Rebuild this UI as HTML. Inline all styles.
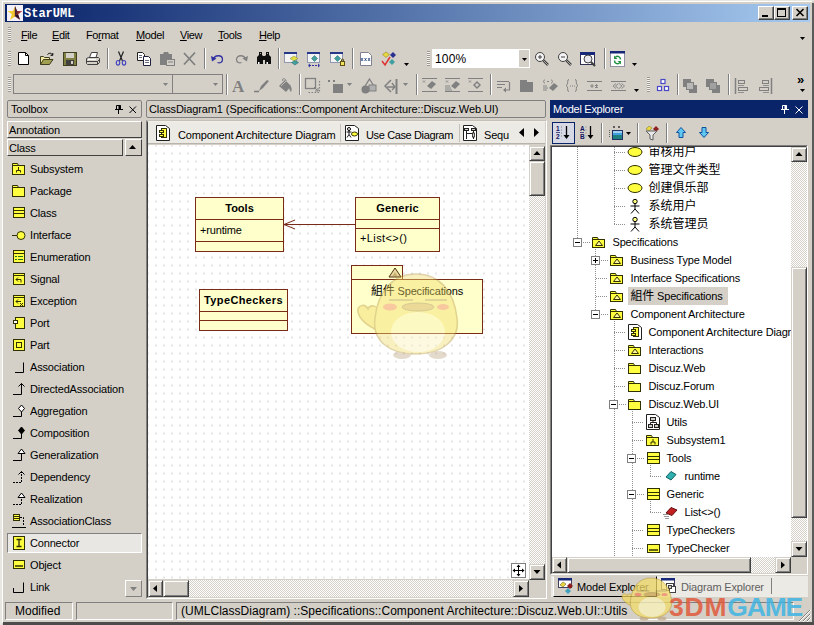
<!DOCTYPE html><html><head><meta charset="utf-8"><title>StarUML</title><style>
*{box-sizing:border-box;margin:0;padding:0}
html,body{width:814px;height:625px;overflow:hidden;background:#d4d0c8}
body{position:relative;font-family:"Liberation Sans","Noto Sans CJK SC",sans-serif;font-size:11px;color:#000;letter-spacing:-0.17px}
.a{position:absolute}
.t{position:absolute;white-space:nowrap;line-height:14px;height:14px}
.raised{border:1px solid;border-color:#fff #404040 #404040 #fff;background:#d4d0c8}
.sunk{border:1px solid;border-color:#808080 #fff #fff #808080}
.sep{position:absolute;width:2px;border-left:1px solid #808080;border-right:1px solid #fff}
.grip{position:absolute;width:3px;background:repeating-linear-gradient(to bottom,#9a9890 0,#9a9890 1px,#f4f2ee 1px,#f4f2ee 2px)}
svg{position:absolute;overflow:visible}
u{text-decoration:underline}
</style></head><body>
<div class="a" style="left:0;top:0;width:814px;height:1px;background:#e8e6e0"></div>
<div class="a" style="left:0;top:0;width:2px;height:625px;background:#e8e6e0"></div>
<div class="a" style="left:2px;top:1px;width:810px;height:1px;background:#fff"></div>
<div class="a" style="left:2px;top:1px;width:1px;height:622px;background:#fff"></div>
<div class="a" style="left:812px;top:3px;width:2px;height:622px;background:#5a5a5a"></div>
<div class="a" style="left:5px;top:4px;width:805px;height:18px;background:linear-gradient(to right,#0a246a 0%,#0a246a 2%,#a6caf0 100%)"></div>
<div class="t" style="left:24px;top:7px;font-family:'Liberation Mono',monospace;font-weight:bold;font-size:12px;color:#fff;letter-spacing:0">StarUML</div>
<div class="a" style="left:7px;top:5px;width:16px;height:16px;background:#f4f0f8"></div>
<svg style="left:7px;top:5px" width="16" height="16"><defs><linearGradient id="sg" x1="0" x2="1"><stop offset="0" stop-color="#f8e030"/><stop offset="0.450" stop-color="#f0c030"/><stop offset="0.550" stop-color="#602020"/><stop offset="1" stop-color="#d05050"/></linearGradient></defs><path d="M8 1l2 5h5.500l-4.300 3.300 1.800 5.700-5-3.500-5 3.500 1.800-5.700-4.300-3.300h5.500z" fill="url(#sg)"/><path d="M8 1l2 5 -2 5.500z" fill="#402040"/><path d="M8 10.500l5 4-2-5z" fill="#201030"/></svg>
<div class="a" style="left:758px;top:6px;width:16px;height:14px;background:#d4d0c8;border:1px solid;border-color:#fff #404040 #404040 #fff;box-shadow:inset -1px -1px 0 #808080"></div>
<div class="a" style="left:774px;top:6px;width:16px;height:14px;background:#d4d0c8;border:1px solid;border-color:#fff #404040 #404040 #fff;box-shadow:inset -1px -1px 0 #808080"></div>
<div class="a" style="left:792px;top:6px;width:16px;height:14px;background:#d4d0c8;border:1px solid;border-color:#fff #404040 #404040 #fff;box-shadow:inset -1px -1px 0 #808080"></div>
<div class="a" style="left:762px;top:15px;width:6px;height:2px;background:#000"></div>
<div class="a" style="left:777px;top:8px;width:9px;height:9px;border:1px solid #000;border-top-width:2px"></div>
<svg style="left:796px;top:9px" width="8" height="7"><path d="M0.500 0l7 7M7.500 0l-7 7" stroke="#000" stroke-width="1.600" fill="none"/></svg>
<div class="t" style="left:21px;top:28px;font-size:11px;letter-spacing:-0.4px"><u>F</u>ile</div>
<div class="t" style="left:52px;top:28px;font-size:11px;letter-spacing:-0.4px"><u>E</u>dit</div>
<div class="t" style="left:86px;top:28px;font-size:11px;letter-spacing:-0.4px">Fo<u>r</u>mat</div>
<div class="t" style="left:136px;top:28px;font-size:11px;letter-spacing:-0.4px"><u>M</u>odel</div>
<div class="t" style="left:180px;top:28px;font-size:11px;letter-spacing:-0.4px"><u>V</u>iew</div>
<div class="t" style="left:218px;top:28px;font-size:11px;letter-spacing:-0.4px"><u>T</u>ools</div>
<div class="t" style="left:259px;top:28px;font-size:11px;letter-spacing:-0.4px"><u>H</u>elp</div>
<div class="grip" style="left:8px;top:27px;height:15px"></div>
<div class="grip" style="left:8px;top:51px;height:15px"></div>
<div class="grip" style="left:8px;top:77px;height:15px"></div>
<svg style="left:16px;top:51px" width="16" height="16" viewBox="0 0 16 16"><path d="M2.5 1.5h7l3 3v9h-10z" fill="#fff" stroke="#000"/><path d="M9.5 1.5v3h3" fill="none" stroke="#000"/></svg>
<svg style="left:39px;top:51px" width="16" height="16" viewBox="0 0 16 16"><path d="M1.5 13.5v-8h3l1 1h5v2" fill="#f0e8a0" stroke="#404020"/><path d="M1.5 13.5l3-5h9.5l-3.500 5z" fill="#a0a050" stroke="#404020"/><path d="M8.500 3.500c2-2 4-1.500 5 0.500m0.300-2v2.300h-2.300" fill="none" stroke="#000"/></svg>
<svg style="left:62px;top:51px" width="16" height="16" viewBox="0 0 16 16"><rect x="1.500" y="1.500" width="13" height="13" fill="#808040" stroke="#404020"/><rect x="4" y="2" width="8" height="5" fill="#d4d0c8"/><rect x="4" y="9" width="8" height="5" fill="#404040"/><rect x="9" y="10" width="2" height="3" fill="#d4d0c8"/></svg>
<svg style="left:85px;top:51px" width="16" height="16" viewBox="0 0 16 16"><path d="M4.500 6.500l2-5h6l-1.500 5" fill="#fff" stroke="#404040"/><path d="M1.500 7.500l2-1h10l1 1v4l-2 2h-10l-1-1z" fill="#d4d0c8" stroke="#404040"/><path d="M1.500 10.500h11l2-2M12.500 10.500v3" fill="none" stroke="#404040"/><rect x="3" y="8" width="8" height="1" fill="#fff"/></svg>
<svg style="left:113px;top:51px" width="16" height="16" viewBox="0 0 16 16"><path d="M5.500 0.500l4 9.500M10.500 0.500l-4 9.500" stroke="#202020" fill="none" stroke-width="1.200"/><ellipse cx="5" cy="11.800" rx="1.700" ry="2.300" fill="none" stroke="#4848c0" stroke-width="1.200"/><ellipse cx="11" cy="11.800" rx="1.700" ry="2.300" fill="none" stroke="#4848c0" stroke-width="1.200"/></svg>
<svg style="left:136px;top:51px" width="16" height="16" viewBox="0 0 16 16"><path d="M1.500 1.500h5l2 2v6h-7z" fill="#fff" stroke="#202020"/><path d="M7.500 5.500h5l2 2v7h-7z" fill="#fff" stroke="#202040"/><path d="M3 4.500h3M3 6.500h3M9 9.500h4M9 11.500h4" stroke="#404060" stroke-width="0.800"/></svg>
<svg style="left:159px;top:51px" width="16" height="16" viewBox="0 0 16 16"><path d="M1 3h3l1-2h4l1 2h3v11h-12z" fill="#808080"/><rect x="7.500" y="8.500" width="8" height="6" fill="#d4d0c8" stroke="#808080"/><path d="M9 11h5" stroke="#808080"/></svg>
<svg style="left:182px;top:51px" width="16" height="16" viewBox="0 0 16 16"><path d="M2 2l11 12M13 1.500l-11 12" stroke="#808080" stroke-width="1.800" fill="none"/></svg>
<svg style="left:210px;top:51px" width="16" height="16" viewBox="0 0 16 16"><path d="M3.500 8.500c1-5 9-5 9 0c0 3-3 4-5 3" fill="none" stroke="#3030a0" stroke-width="1.300"/><path d="M1 5l1 5.500 4.500-3z" fill="#3030a0"/></svg>
<svg style="left:233px;top:51px" width="16" height="16" viewBox="0 0 16 16"><path d="M12.500 8.500c-1-5-9-5-9 0c0 3 3 4 5 3" fill="none" stroke="#808080" stroke-width="1.300"/><path d="M15 5l-1 5.500-4.500-3z" fill="#808080"/></svg>
<svg style="left:256px;top:51px" width="16" height="16" viewBox="0 0 16 16"><path d="M3 1h3v3l1 1v8h-6v-7l2-2zM10 1h3v3l2 2v7h-6v-8l1-1z" fill="#101010"/><rect x="6" y="5" width="4" height="4" fill="#101010"/><rect x="2" y="11" width="1.500" height="2" fill="#fff"/><rect x="10.500" y="11" width="1.500" height="2" fill="#fff"/><rect x="4" y="2" width="1" height="1" fill="#aaa"/><rect x="11" y="2" width="1" height="1" fill="#aaa"/></svg>
<svg style="left:284px;top:51px" width="16" height="16" viewBox="0 0 16 16"><rect x="0.500" y="1.500" width="12" height="10" fill="#f4f4f4" stroke="#9098b0"/><rect x="0" y="1" width="13" height="2" fill="#283888"/><path d="M10 5l4 2.500-4 2.500-4-2.500z" fill="#e0e040" stroke="#808040" stroke-width="0.500"/><path d="M11 9.500l3.500 2-3.500 2.500-3.500-2.500z" fill="#40a0a0" stroke="#206060" stroke-width="0.500"/></svg>
<svg style="left:307px;top:51px" width="16" height="16" viewBox="0 0 16 16"><rect x="0.500" y="1.500" width="12" height="10" fill="#f4f4f4" stroke="#9098b0"/><rect x="0" y="1" width="13" height="2" fill="#283888"/><path d="M7.500 4.500l3 3-3 3-3-3z" fill="#40a0a0" stroke="#206060" stroke-width="0.500"/><path d="M2 14.500h10M3 13l-2 1.500 2 1.500M11 13l2 1.500-2 1.500" stroke="#3030a0" fill="none" stroke-dasharray="2 1"/></svg>
<svg style="left:330px;top:51px" width="16" height="16" viewBox="0 0 16 16"><rect x="0.500" y="1.500" width="12" height="10" fill="#f4f4f4" stroke="#9098b0"/><rect x="0" y="1" width="13" height="2" fill="#283888"/><path d="M7.500 4.500l3 3-3 3-3-3z" fill="#40a0a0" stroke="#206060" stroke-width="0.500"/><rect x="10.500" y="10.500" width="4" height="4" fill="#f0e060" stroke="#605010"/><path d="M11.500 10.500v-1.500c0-1.500 2-1.500 2 0v1.500" fill="none" stroke="#605010"/></svg>
<svg style="left:358px;top:51px" width="16" height="16" viewBox="0 0 16 16"><path d="M2.500 1.500h8l3 3v10h-11z" fill="#fff" stroke="#808090"/><path d="M3 7l2 3M5 7l-2 3M6.500 7l2 3M8.500 7l-2 3M10 7l2 3M12 7l-2 3" stroke="#204080" stroke-width="0.800"/></svg>
<svg style="left:381px;top:51px" width="16" height="16" viewBox="0 0 16 16"><path d="M5 1l3.500 2.500-3.500 3-3.500-3z" fill="#e8d840" stroke="#807020" stroke-width="0.500"/><path d="M12 1l3 3-3 3-3-3z" fill="#283090"/><path d="M11 8l3 3-3 3-3-3z" fill="#40a0a0"/><path d="M1 10l3 4 5-8" fill="none" stroke="#e03030" stroke-width="1.500"/></svg>
<div class="sep" style="left:107px;top:48px;height:21px"></div>
<div class="sep" style="left:204px;top:48px;height:21px"></div>
<div class="sep" style="left:278px;top:48px;height:21px"></div>
<div class="sep" style="left:352px;top:48px;height:21px"></div>
<svg style="left:404px;top:63px" width="5" height="3"><path d="M0 0h5l-2.5 3z" fill="#000"/></svg>
<svg style="left:800px;top:37px" width="5" height="3"><path d="M0 0h5l-2.5 3z" fill="#000"/></svg>
<div class="grip" style="left:427px;top:51px;height:15px"></div>
<div class="a" style="left:432px;top:49px;width:98px;height:19px;background:#fff"></div>
<div class="t" style="left:435px;top:52px;font-size:12px;letter-spacing:0.2px;line-height:15px">100%</div>
<div class="a" style="left:519px;top:50px;width:10px;height:17px;background:#d4d0c8"></div>
<svg style="left:522px;top:58px" width="5" height="3"><path d="M0 0h5l-2.5 3z" fill="#000"/></svg>
<svg style="left:534px;top:51px" width="16" height="16" viewBox="0 0 16 16"><circle cx="6" cy="6" r="4.500" fill="#f4f4f4" stroke="#404040"/><path d="M4 6h4M6 4v4" stroke="#404040"/><path d="M9.500 9.500l4.500 4.500" stroke="#404040" stroke-width="2.500"/><path d="M10 10l4 4" stroke="#c8c8c8" stroke-width="0.800"/></svg>
<svg style="left:557px;top:51px" width="16" height="16" viewBox="0 0 16 16"><circle cx="6" cy="6" r="4.500" fill="#f4f4f4" stroke="#404040"/><path d="M4 6h4" stroke="#404040"/><path d="M9.500 9.500l4.500 4.500" stroke="#404040" stroke-width="2.500"/><path d="M10 10l4 4" stroke="#c8c8c8" stroke-width="0.800"/></svg>
<svg style="left:580px;top:51px" width="16" height="16" viewBox="0 0 16 16"><rect x="0.500" y="1.500" width="14" height="12" fill="#fff" stroke="#303050"/><rect x="0" y="1" width="15" height="3" fill="#182878"/><circle cx="8" cy="8" r="4" fill="#e8e8f0" stroke="#404040"/><path d="M11 11l4 4" stroke="#404040" stroke-width="2.200"/></svg>
<div class="sep" style="left:604px;top:48px;height:21px"></div>
<svg style="left:610px;top:51px" width="16" height="16" viewBox="0 0 16 16"><rect x="0.500" y="0.500" width="14" height="15" fill="#fff" stroke="#9090a0"/><rect x="0" y="0" width="15" height="2.500" fill="#182878"/><path d="M10.500 8.500c0-3-3-4-5-2.500" fill="none" stroke="#209040" stroke-width="1.500"/><path d="M4 4.500v3.500h3.500z" fill="#209040"/><path d="M4.500 9.500c0 3 3 4 5 2.500" fill="none" stroke="#209040" stroke-width="1.500"/><path d="M11 13.500v-3.500h-3.500z" fill="#209040"/></svg>
<svg style="left:632px;top:63px" width="5" height="3"><path d="M0 0h5l-2.5 3z" fill="#000"/></svg>
<div class="a" style="left:13px;top:74px;width:160px;height:20px;border:1px solid #808080"></div>
<div class="a" style="left:172px;top:74px;width:51px;height:20px;border:1px solid #808080"></div>
<svg style="left:163px;top:83px" width="5" height="3"><path d="M0 0h5l-2.5 3z" fill="#808080"/></svg>
<svg style="left:213px;top:83px" width="5" height="3"><path d="M0 0h5l-2.5 3z" fill="#808080"/></svg>
<svg style="left:231px;top:78px" width="16" height="16" viewBox="0 0 16 16"><text x="1" y="14" font-family="Liberation Serif,serif" font-weight="bold" font-size="17" fill="#808080" letter-spacing="0">A</text></svg>
<svg style="left:254px;top:78px" width="16" height="16" viewBox="0 0 16 16"><path d="M0 13.500h5" stroke="#808080" stroke-width="1.600"/><path d="M5 13l2-5 6-6 2 1-6 7z" fill="#808080"/></svg>
<svg style="left:277px;top:78px" width="16" height="16" viewBox="0 0 16 16"><path d="M2 8l6-6 6 6-5 6z" fill="#808080"/><path d="M6 3c-2-3 3-3 3 0" fill="none" stroke="#808080"/><path d="M13 8c2 1 2 4 1 6c-1-1-2-3-2-5z" fill="#808080"/><path d="M4 8l5-5" stroke="#d4d0c8" stroke-width="0.800"/></svg>
<svg style="left:305px;top:78px" width="16" height="16" viewBox="0 0 16 16"><rect x="0.500" y="0.500" width="10" height="10" fill="#d4d0c8" stroke="#808080" stroke-width="1.300"/><path d="M14.500 3v11.500h-12" fill="none" stroke="#808080" stroke-dasharray="1.500 1.500" stroke-width="1.200"/><path d="M9 9l4 4M13 10v3h-3" stroke="#808080" fill="none"/></svg>
<svg style="left:328px;top:78px" width="16" height="16" viewBox="0 0 16 16"><path d="M0 2l2 2M2 2l-2 2M5 2l2 2M7 2l-2 2" stroke="#808080"/><rect x="5" y="6" width="10" height="9" fill="#808080"/></svg>
<svg style="left:361px;top:78px" width="16" height="16" viewBox="0 0 16 16"><path d="M8.500 1l5 8h-10z" fill="#d4d0c8" stroke="#808080" stroke-width="1.300"/><rect x="8" y="7" width="7" height="6" fill="#b0b0b0" stroke="#808080"/><circle cx="4.500" cy="11.500" r="4" fill="#808080"/></svg>
<svg style="left:384px;top:78px" width="16" height="16" viewBox="0 0 16 16"><path d="M7 2l-6 6 6 6" fill="none" stroke="#808080" stroke-width="1.500"/><path d="M12.500 1v15" stroke="#808080" stroke-width="2"/><path d="M3 9h8M8 5l3 4-3 3" fill="none" stroke="#808080" stroke-width="1.300"/></svg>
<svg style="left:422px;top:78px" width="16" height="16" viewBox="0 0 16 16"><path d="M0 0.500h15M0 13.500h15" stroke="#808080"/><path d="M1 2.500l2 2M3 2.500l-2 2" stroke="#808080" stroke-width="0.800"/><g transform="translate(0,-1)"><path d="M5 9l5-5 4 3-5 5z" fill="#808080"/></g></svg>
<svg style="left:445px;top:78px" width="16" height="16" viewBox="0 0 16 16"><path d="M0 0.500h15M0 13.500h15" stroke="#808080"/><path d="M1 2.500l2 2M3 2.500l-2 2" stroke="#808080" stroke-width="0.800"/><g transform="translate(0,-1)"><path d="M6 9l5-5 4 3-5 5z" fill="#808080"/><path d="M0 9h5M0 11h6M0 13h7" stroke="#808080" stroke-width="0.900"/></g></svg>
<svg style="left:468px;top:78px" width="16" height="16" viewBox="0 0 16 16"><path d="M0 0.500h15M0 13.500h15" stroke="#808080"/><path d="M1 2.500l2 2M3 2.500l-2 2" stroke="#808080" stroke-width="0.800"/><g transform="translate(0,-1)"><path d="M9 4l4 4-4 4-4-4z" fill="#808080"/><path d="M9 6l2 2-2 2-2-2z" fill="#d4d0c8"/></g></svg>
<svg style="left:496px;top:78px" width="16" height="16" viewBox="0 0 16 16"><path d="M1 3.500h12M1 6.500h8M1 9.500h5" stroke="#808080" stroke-width="1.200"/><path d="M13.500 4v8h-5" fill="none" stroke="#808080" stroke-width="1.200"/><path d="M10 9.500l-3 2.500 3 2.500z" fill="#808080"/></svg>
<svg style="left:519px;top:78px" width="16" height="16" viewBox="0 0 16 16"><path d="M1 2h7v2h6v10h-13z" fill="#808080"/></svg>
<svg style="left:542px;top:78px" width="16" height="16" viewBox="0 0 16 16"><path d="M3 2c-2 0-2 3 0 3M9 2c2 0 2 3 0 3M5 3.500h2" stroke="#808080" fill="none"/><path d="M1 8h4M1 10h5M1 12h4" stroke="#808080" stroke-width="0.900"/><path d="M7 10l5-5 4 3-5 5z" fill="#808080"/></svg>
<svg style="left:564px;top:78px" width="16" height="16" viewBox="0 0 16 16"><path d="M5 1.500c-2 0-1 3-1.500 4.500c-0.500 1-1.500 1.500-1.500 1.500s1 0.500 1.500 1.500c0.500 1.500-0.500 4.500 1.500 4.500M11 1.500c2 0 1 3 1.500 4.500c0.500 1 1.500 1.500 1.500 1.500s-1 0.500-1.500 1.500c-0.500 1.500 0.500 4.500-1.500 4.500" fill="none" stroke="#808080"/><path d="M6 8h1M8 8h1M10 8h1" stroke="#808080"/></svg>
<svg style="left:587px;top:78px" width="16" height="16" viewBox="0 0 16 16"><path d="M0 3.500h15M0 12.500h15" stroke="#808080"/><path d="M3 8h4M5 6v4M8 7l3 3M11 7l-3 3M9.500 6v4" stroke="#808080" stroke-width="0.900"/></svg>
<svg style="left:611px;top:78px" width="16" height="16" viewBox="0 0 16 16"><path d="M0 3.500h15M0 12.500h15" stroke="#808080"/><path d="M5 5.500l-3 2.500 3 2.500M7.500 5.500l-3 2.500 3 2.500M8 5.500l3 2.500-3 2.500M10.500 5.500l3 2.500-3 2.500" stroke="#808080" fill="none" stroke-width="0.900"/></svg>
<svg style="left:655px;top:78px" width="16" height="16" viewBox="0 0 16 16"><rect x="6" y="1.500" width="4" height="4" fill="#fff" stroke="#4848c8" stroke-width="1.200"/><rect x="2.500" y="8.500" width="4" height="4" fill="#fff" stroke="#4848c8" stroke-width="1.200"/><rect x="9.500" y="8.500" width="4" height="4" fill="#fff" stroke="#4848c8" stroke-width="1.200"/></svg>
<svg style="left:682px;top:78px" width="16" height="16" viewBox="0 0 16 16"><rect x="1" y="1" width="8" height="8" fill="#808080"/><rect x="7" y="7" width="8" height="8" fill="#808080"/><rect x="4.500" y="4.500" width="7" height="7" fill="#b8b8b8" stroke="#808080"/></svg>
<svg style="left:705px;top:78px" width="16" height="16" viewBox="0 0 16 16"><rect x="1" y="1" width="8" height="8" fill="#808080"/><rect x="7" y="7" width="8" height="8" fill="#808080"/><rect x="4.500" y="4.500" width="7" height="7" fill="#a0a0a0" stroke="#808080"/></svg>
<svg style="left:734px;top:78px" width="16" height="16" viewBox="0 0 16 16"><path d="M1.500 0v16" stroke="#808080" stroke-width="1.500"/><rect x="4.500" y="2.500" width="6" height="3" fill="none" stroke="#808080"/><rect x="4.500" y="9.500" width="9" height="3" fill="none" stroke="#808080"/><path d="M4 7.500h6M4 14.500h6" stroke="#808080" stroke-width="0.800"/></svg>
<svg style="left:757px;top:78px" width="16" height="16" viewBox="0 0 16 16"><path d="M14.500 0v16" stroke="#808080" stroke-width="1.500"/><rect x="5.500" y="2.500" width="6" height="3" fill="none" stroke="#808080"/><rect x="2.500" y="9.500" width="9" height="3" fill="none" stroke="#808080"/><path d="M6 7.500h6M6 14.500h6" stroke="#808080" stroke-width="0.800"/></svg>
<div class="sep" style="left:226px;top:74px;height:21px"></div>
<div class="sep" style="left:299px;top:74px;height:21px"></div>
<div class="sep" style="left:416px;top:74px;height:21px"></div>
<div class="sep" style="left:490px;top:74px;height:21px"></div>
<div class="sep" style="left:677px;top:74px;height:21px"></div>
<div class="sep" style="left:728px;top:74px;height:21px"></div>
<svg style="left:347px;top:83px" width="5" height="3"><path d="M0 0h5l-2.5 3z" fill="#808080"/></svg>
<svg style="left:403px;top:83px" width="5" height="3"><path d="M0 0h5l-2.5 3z" fill="#808080"/></svg>
<svg style="left:634px;top:89px" width="5" height="3"><path d="M0 0h5l-2.5 3z" fill="#000"/></svg>
<div class="grip" style="left:647px;top:77px;height:15px"></div>
<div class="t" style="left:797px;top:73px;font-size:13px;font-weight:bold;letter-spacing:-1px">&#187;</div>
<svg style="left:800px;top:89px" width="5" height="3"><path d="M0 0h5l-2.5 3z" fill="#000"/></svg>
<div class="a" style="left:7px;top:100px;width:135px;height:18px;border:1px solid #808080;border-radius:2px"></div>
<div class="t" style="left:11px;top:102px">Toolbox</div>
<div class="a" style="left:146px;top:100px;width:400px;height:18px;border:1px solid #808080;border-radius:2px"></div>
<div class="t" style="left:149px;top:102px;letter-spacing:-0.1px">ClassDiagram1 (Specifications::Component Architecture::Discuz.Web.UI)</div>
<div class="a" style="left:550px;top:100px;width:258px;height:18px;background:#0a246a"></div>
<div class="t" style="left:553px;top:102px;color:#fff;letter-spacing:-0.28px">Model Explorer</div>
<div class="a raised" style="left:7px;top:121px;width:135px;height:17px"></div><div class="t" style="left:9px;top:123px">Annotation</div>
<div class="a raised" style="left:7px;top:139px;width:116px;height:17px"></div><div class="t" style="left:9px;top:141px">Class</div>
<div class="a raised" style="left:125px;top:139px;width:17px;height:17px"></div>
<svg style="left:11px;top:161px" width="16" height="16"><path d="M1.500 4.500v-2h5l1 2" fill="#ffff40" stroke="#303000"/><rect x="1.500" y="4.500" width="12" height="9" fill="#ffff40" stroke="#303000"/><path d="M7.500 6v3M5.500 11.500v-2h4v2" fill="none" stroke="#303000"/></svg>
<div class="t" style="left:30px;top:162px">Subsystem</div>
<svg style="left:11px;top:183px" width="16" height="16"><path d="M1.500 4.500v-2h5l1 2" fill="#ffff40" stroke="#303000"/><rect x="1.500" y="4.500" width="12" height="9" fill="#ffff40" stroke="#303000"/></svg>
<div class="t" style="left:30px;top:184px">Package</div>
<svg style="left:11px;top:205px" width="16" height="16"><rect x="2.500" y="2.500" width="11" height="10" fill="#ffff40" stroke="#303000"/><path d="M2.500 5.500h11M2.500 8.500h11" stroke="#303000"/></svg>
<div class="t" style="left:30px;top:206px">Class</div>
<svg style="left:11px;top:227px" width="16" height="16"><path d="M1 8.500h5" stroke="#303000"/><circle cx="10" cy="8.500" r="4" fill="#ffff40" stroke="#303000"/></svg>
<div class="t" style="left:30px;top:228px">Interface</div>
<svg style="left:11px;top:249px" width="16" height="16"><rect x="2.500" y="1.500" width="11" height="12" fill="#ffff40" stroke="#303000"/><path d="M2.500 4.500h11" stroke="#303000"/><path d="M4 7.500h2M7 7.500h5M4 10.500h2M7 10.500h5" stroke="#207020"/></svg>
<div class="t" style="left:30px;top:250px">Enumeration</div>
<svg style="left:11px;top:271px" width="16" height="16"><rect x="2.500" y="2.500" width="11" height="11" fill="#ffff40" stroke="#303000"/><path d="M2.500 4.500h11" stroke="#303000"/><path d="M5 8.500h5v3M7 6.500l-2 2 2 2" fill="none" stroke="#303000"/></svg>
<div class="t" style="left:30px;top:272px">Signal</div>
<svg style="left:11px;top:293px" width="16" height="16"><rect x="2.500" y="2.500" width="11" height="11" fill="#ffff40" stroke="#303000"/><path d="M2.500 4.500h11" stroke="#303000"/><path d="M5 8.500h5M7 6.500l-2 2 2 2M9 10l3 3M12 10l-3 3" fill="none" stroke="#303000"/></svg>
<div class="t" style="left:30px;top:294px">Exception</div>
<svg style="left:11px;top:315px" width="16" height="16"><rect x="4.500" y="2.500" width="9" height="11" fill="#ffff40" stroke="#303000"/><rect x="2.500" y="5.500" width="4" height="3" fill="#fff" stroke="#303000"/></svg>
<div class="t" style="left:30px;top:316px">Port</div>
<svg style="left:11px;top:337px" width="16" height="16"><rect x="2.500" y="2.500" width="11" height="11" fill="#ffff40" stroke="#303000"/><rect x="5.500" y="5.500" width="5" height="5" fill="#ffff40" stroke="#303000"/></svg>
<div class="t" style="left:30px;top:338px">Part</div>
<svg style="left:11px;top:359px" width="16" height="16"><path d="M4 13.500h8.500v-10" fill="none" stroke="#000"/></svg>
<div class="t" style="left:30px;top:360px">Association</div>
<svg style="left:11px;top:381px" width="16" height="16"><path d="M2 13.500h8.500v-11M7.500 5.500l3-3 3 3" fill="none" stroke="#000"/></svg>
<div class="t" style="left:30px;top:382px">DirectedAssociation</div>
<svg style="left:11px;top:403px" width="16" height="16"><path d="M2 13.500h8.500v-5" fill="none" stroke="#000"/><path d="M10.500 2l3 3.500-3 3.500-3-3.500z" fill="#fff" stroke="#000"/></svg>
<div class="t" style="left:30px;top:404px">Aggregation</div>
<svg style="left:11px;top:425px" width="16" height="16"><path d="M2 13.500h8.500v-5" fill="none" stroke="#000"/><path d="M10.500 2l3 3.500-3 3.500-3-3.500z" fill="#000" stroke="#000"/></svg>
<div class="t" style="left:30px;top:426px">Composition</div>
<svg style="left:11px;top:447px" width="16" height="16"><path d="M2 13.500h8.500v-7" fill="none" stroke="#000"/><path d="M10.500 2l3.500 4.500h-7z" fill="#fff" stroke="#000"/></svg>
<div class="t" style="left:30px;top:448px">Generalization</div>
<svg style="left:11px;top:469px" width="16" height="16"><path d="M2 13.500h8.500v-11" fill="none" stroke="#000" stroke-dasharray="2 1"/><path d="M7.500 5.500l3-3 3 3" fill="none" stroke="#000"/></svg>
<div class="t" style="left:30px;top:470px">Dependency</div>
<svg style="left:11px;top:491px" width="16" height="16"><path d="M2 13.500h8.500v-7" fill="none" stroke="#000" stroke-dasharray="2 1"/><path d="M10.500 2l3.500 4.500h-7z" fill="#fff" stroke="#000"/></svg>
<div class="t" style="left:30px;top:492px">Realization</div>
<svg style="left:11px;top:513px" width="16" height="16"><rect x="2.500" y="1.500" width="6" height="6" fill="#ffff40" stroke="#303000"/><path d="M2.500 3.500h6M2.500 5.500h6" stroke="#303000"/><path d="M9 4.500h3.500v8" fill="none" stroke="#000" stroke-dasharray="2 1"/><path d="M1 14.500h14" stroke="#000"/></svg>
<div class="t" style="left:30px;top:514px">AssociationClass</div>
<div class="a" style="left:7px;top:533px;width:135px;height:20px;background:#e9e7e3;border:1px solid;border-color:#808080 #fff #fff #808080"></div>
<svg style="left:11px;top:535px" width="16" height="16"><rect x="2.500" y="1.500" width="11" height="13" fill="#ffff40" stroke="#303000"/><path d="M5.500 4.500h5M5.500 11.500h5M8 4.500v7" stroke="#303000" fill="none" stroke-width="1.300"/></svg>
<div class="t" style="left:30px;top:536px">Connector</div>
<svg style="left:11px;top:557px" width="16" height="16"><rect x="2.500" y="3.500" width="11" height="8" fill="#ffff40" stroke="#303000"/><path d="M4 9h8" stroke="#303000" stroke-width="1.500"/></svg>
<div class="t" style="left:30px;top:558px">Object</div>
<svg style="left:11px;top:579px" width="16" height="16"><path d="M2.500 9v4.500h10v-10" fill="none" stroke="#000"/><path d="M2.500 13.500h3" stroke="#000"/></svg>
<div class="t" style="left:30px;top:580px">Link</div>
<div class="a" style="left:146px;top:120px;width:401px;height:479px;border:1px solid;border-color:#c4c0b8 #fff #fff #808080"></div>
<div class="a" style="left:147px;top:121px;width:399px;height:477px;border:1px solid;border-color:#f0eee8 #d4d0c8 #d4d0c8 #404040;background:#d4d0c8"></div>
<div class="a" style="left:148px;top:122px;width:397px;height:22px;background:#eceae4"></div>
<div class="a" style="left:148px;top:143px;width:397px;height:1px;background:#b8b4ac"></div>
<svg style="left:155px;top:125px" width="16" height="16"><path d="M1.500 0.500h9l4 3v12h-13z" fill="#fff" stroke="#202020"/><rect x="6.500" y="3.500" width="5" height="9" fill="#ffff40" stroke="#303000"/><rect x="4.500" y="5.500" width="4" height="2" fill="#ffff40" stroke="#303000"/><rect x="4.500" y="9.500" width="4" height="2" fill="#ffff40" stroke="#303000"/></svg>
<div class="t" style="left:178px;top:128px">Component Architecture Diagram</div>
<div class="a" style="left:340px;top:124px;width:1px;height:18px;background:#c4c0b8"></div>
<svg style="left:344px;top:125px" width="16" height="16"><path d="M1.500 0.500h9l4 3v12h-13z" fill="#fff" stroke="#202020"/><circle cx="5" cy="4" r="1.500" fill="none" stroke="#000"/><path d="M5 5.500v4M2.500 7h5M5 9.500l-2 3M5 9.500l2 3" stroke="#000" fill="none" stroke-width="0.900"/><ellipse cx="10.500" cy="9" rx="3" ry="2" fill="#ffff40" stroke="#303000"/></svg>
<div class="t" style="left:366px;top:128px;letter-spacing:-0.37px">Use Case Diagram</div>
<div class="a" style="left:459px;top:124px;width:1px;height:18px;background:#c4c0b8"></div>
<svg style="left:462px;top:125px" width="16" height="16"><path d="M1.500 0.500h9l4 3v12h-13z" fill="#fff" stroke="#202020"/><rect x="2.500" y="3.500" width="4" height="2" fill="#d4d0c8" stroke="#202020"/><rect x="9.500" y="3.500" width="4" height="2" fill="#d4d0c8" stroke="#202020"/><path d="M4.500 6v8M11.500 6v8" stroke="#202020"/><path d="M4.500 8.500h7" stroke="#202020"/><rect x="10.500" y="8" width="2" height="4" fill="#d4d0c8" stroke="#202020" stroke-width="0.800"/></svg>
<div class="t" style="left:484px;top:128px">Sequ</div>
<svg style="left:519px;top:128px" width="22" height="10"><path d="M5 0v9l-5-4.500zM15 0v9l5-4.500z" fill="#000"/></svg>
<div class="a" style="left:148px;top:145px;width:381px;height:434px;background-color:#fff;background-image:radial-gradient(circle,#e2e2e2 0.600px,rgba(255,255,255,0) 1.400px);background-size:8px 8px;background-position:4px 4.500px"></div>
<div class="a" style="left:529px;top:146px;width:16px;height:434px;background-image:repeating-conic-gradient(#fff 0% 25%,#d4d0c8 0% 50%);background-size:2px 2px"></div>
<div class="a" style="left:529px;top:146px;width:16px;height:15px;background:#d4d0c8;border:1px solid;border-color:#d4d0c8 #404040 #404040 #d4d0c8;box-shadow:inset 1px 1px 0 #fff,inset -1px -1px 0 #808080"></div>
<svg style="left:0;top:0" width="814" height="625"><path d="M533.5 155.0h7l-3.500-4z" fill="#000"/></svg>
<div class="a" style="left:529px;top:161px;width:16px;height:35px;background:#d4d0c8;border:1px solid;border-color:#d4d0c8 #404040 #404040 #d4d0c8;box-shadow:inset 1px 1px 0 #fff,inset -1px -1px 0 #808080"></div>
<div class="a" style="left:529px;top:564px;width:16px;height:16px;background:#d4d0c8;border:1px solid;border-color:#d4d0c8 #404040 #404040 #d4d0c8;box-shadow:inset 1px 1px 0 #fff,inset -1px -1px 0 #808080"></div>
<svg style="left:0;top:0" width="814" height="625"><path d="M533.5 570.0h7l-3.500 4z" fill="#000"/></svg>
<div class="a" style="left:148px;top:580px;width:381px;height:17px;background-image:repeating-conic-gradient(#fff 0% 25%,#d4d0c8 0% 50%);background-size:2px 2px"></div>
<div class="a" style="left:148px;top:580px;width:15px;height:17px;background:#d4d0c8;border:1px solid;border-color:#d4d0c8 #404040 #404040 #d4d0c8;box-shadow:inset 1px 1px 0 #fff,inset -1px -1px 0 #808080"></div>
<svg style="left:0;top:0" width="814" height="625"><path d="M157.0 585.0v7l-4-3.500z" fill="#000"/></svg>
<div class="a" style="left:163px;top:580px;width:26px;height:17px;background:#d4d0c8;border:1px solid;border-color:#d4d0c8 #404040 #404040 #d4d0c8;box-shadow:inset 1px 1px 0 #fff,inset -1px -1px 0 #808080"></div>
<div class="a" style="left:513px;top:580px;width:16px;height:17px;background:#d4d0c8;border:1px solid;border-color:#d4d0c8 #404040 #404040 #d4d0c8;box-shadow:inset 1px 1px 0 #fff,inset -1px -1px 0 #808080"></div>
<svg style="left:0;top:0" width="814" height="625"><path d="M519.0 585.0v7l4-3.500z" fill="#000"/></svg>
<div class="a" style="left:529px;top:580px;width:16px;height:17px;background:#d4d0c8"></div>
<div class="a" style="left:511px;top:563px;width:15px;height:15px;background:#fff;border:1px solid #808080"></div>
<svg style="left:511px;top:563px" width="15" height="15"><path d="M7.500 3v9M3 7.500h9" stroke="#000"/><path d="M7.500 1.500l2 2.500h-4zM7.500 13.500l2-2.500h-4zM1.500 7.500l2.500-2v4zM13.500 7.500l-2.500-2v4z" fill="#000"/></svg>
<div class="a" style="left:195px;top:197px;width:89px;height:55px;background:#ffffcc;border:1px solid #7a2a18"></div>
<div class="a" style="left:195px;top:219px;width:89px;height:1px;background:#7a2a18"></div>
<div class="a" style="left:195px;top:241px;width:89px;height:1px;background:#7a2a18"></div>
<div class="t" style="left:195px;top:201px;width:89px;text-align:center;font-weight:bold;letter-spacing:0px">Tools</div>
<div class="t" style="left:200px;top:223px">+runtime</div>
<div class="a" style="left:355px;top:197px;width:85px;height:55px;background:#ffffcc;border:1px solid #7a2a18"></div>
<div class="a" style="left:355px;top:219px;width:85px;height:1px;background:#7a2a18"></div>
<div class="a" style="left:355px;top:228px;width:85px;height:1px;background:#7a2a18"></div>
<div class="t" style="left:355px;top:201px;width:85px;text-align:center;font-weight:bold;letter-spacing:0.25px">Generic</div>
<div class="t" style="left:360px;top:231px"><span style="letter-spacing:0.4px">+List&lt;&gt;()</span></div>
<div class="a" style="left:199px;top:289px;width:89px;height:42px;background:#ffffcc;border:1px solid #7a2a18"></div>
<div class="a" style="left:199px;top:311px;width:89px;height:1px;background:#7a2a18"></div>
<div class="a" style="left:199px;top:320px;width:89px;height:1px;background:#7a2a18"></div>
<div class="t" style="left:199px;top:293px;width:89px;text-align:center;font-weight:bold;letter-spacing:0.38px">TypeCheckers</div>
<svg style="left:0;top:0" width="814" height="625"><path d="M284 224.500h71M295 220l-11 4.500 11 4.500" fill="none" stroke="#7a2a18"/></svg>
<div class="a" style="left:351px;top:265px;width:52px;height:15px;background:#ffffcc;border:1px solid #7a2a18"></div>
<div class="a" style="left:351px;top:279px;width:132px;height:55px;background:#ffffcc;border:1px solid #7a2a18"></div>
<svg style="left:388px;top:267px" width="14" height="11"><path d="M7 1l6 9h-12z" fill="#e8d8a0" stroke="#503010"/><path d="M7 5l2.500 4h-5z" fill="#c8b070"/></svg>
<div class="t" style="left:351px;top:284px;width:132px;text-align:center"><span style="font-size:12px">組件</span> Specifications</div>
<svg style="left:354.0px;top:268.0px;opacity:0.42" width="124.0" height="100.0" viewBox="-62 -50 124 100"><ellipse cx="-14" cy="37" rx="9" ry="4" fill="#c0a888"/><ellipse cx="22" cy="37" rx="9" ry="4" fill="#c0a888"/><path d="M-37 13C-46 9-56 3-58-6C-59-13-51-15-48-9C-46-14-37-13-37-5z" fill="#f0d860" stroke="#b89838" stroke-width="1.500"/><path d="M0-44C24-44 38-26 41 0C44 22 26 36 0 36C-28 36-44 22-41 0C-38-26-24-44 0-44z" fill="#f2dc68" stroke="#b89838" stroke-width="1.500"/><ellipse cx="2" cy="14" rx="27" ry="20" fill="#fbf3b8"/><ellipse cx="-26" cy="-11" rx="7" ry="3.500" fill="#f08060"/><ellipse cx="27" cy="-11" rx="6" ry="3" fill="#f08060"/><ellipse cx="2" cy="-11" rx="16" ry="4" fill="#d0a850" stroke="#a08040"/><path d="M-27 -18h24M9 -18h22" stroke="#a08848" stroke-width="1.500"/></svg>
<div class="a raised" style="left:125px;top:580px;width:17px;height:17px;border-color:#fff #808080 #808080 #fff"></div>
<svg style="left:130px;top:587px" width="7" height="4"><path d="M0 0h7l-3.5 4z" fill="#808080"/></svg>
<div class="a sunk" style="left:5px;top:602px;width:68px;height:18px"></div><div class="t" style="left:15px;top:604px;font-size:12px;letter-spacing:0">Modified</div>
<div class="a sunk" style="left:76px;top:602px;width:97px;height:18px"></div>
<div class="a sunk" style="left:176px;top:602px;width:618px;height:18px"></div><div class="t" style="left:181px;top:604px;font-size:12px;letter-spacing:0.03px">(UMLClassDiagram) ::Specifications::Component Architecture::Discuz.Web.UI::Utils</div>
<svg style="left:781px;top:104px" width="8" height="10"><path d="M1.500 5.500v-4h4v4M0 5.500h8M3.500 6v4" fill="none" stroke="#fff"/><path d="M4.500 1v5" stroke="#fff" stroke-width="2"/></svg>
<svg style="left:795px;top:106px" width="8" height="8"><path d="M0.500 0.500l7 7M7.500 0.500l-7 7" stroke="#fff" fill="none"/></svg>
<svg style="left:115px;top:104px" width="8" height="10"><path d="M1.500 5.500v-4h4v4M0 5.500h8M3.500 6v4" fill="none" stroke="#000"/><path d="M4.500 1v5" stroke="#000" stroke-width="2"/></svg>
<svg style="left:129px;top:106px" width="8" height="8"><path d="M0.500 0.500l6.500 6.500M7 0.500l-6.500 6.500" stroke="#000" fill="none"/></svg>
<svg style="left:129px;top:145px" width="8" height="4"><path d="M0 4h7l-3.500-4z" fill="#000"/></svg>
<div class="a" style="left:552px;top:122px;width:23px;height:22px;background:#d6d8e4;border:1px solid #0a246a"></div>
<svg style="left:556px;top:125px" width="16" height="16"><text x="0" y="6" font-size="6.500" font-weight="bold" font-family="Liberation Sans,sans-serif" fill="#101060">1</text><text x="0" y="14" font-size="6.500" font-weight="bold" font-family="Liberation Sans,sans-serif" fill="#101060">2</text><path d="M0 7.500h4" stroke="#101060" stroke-width="0.700"/><path d="M5 2h1M5 5h1M5 8h1M5 11h1" stroke="#808080"/><path d="M10.500 1v11" stroke="#000" stroke-width="1.300"/><path d="M7.500 10h6l-3 4z" fill="#000"/></svg>
<svg style="left:580px;top:125px" width="16" height="16"><text x="0" y="6" font-size="6.500" font-weight="bold" font-family="Liberation Sans,sans-serif" fill="#101060">A</text><text x="0" y="14" font-size="6.500" font-weight="bold" font-family="Liberation Sans,sans-serif" fill="#101060">B</text><path d="M0 7.500h4" stroke="#101060" stroke-width="0.700"/><path d="M5.500 2h1M5.500 5h1M5.500 8h1M5.500 11h1" stroke="#808080"/><path d="M10.500 1v11" stroke="#000" stroke-width="1.300"/><path d="M7.500 10h6l-3 4z" fill="#000"/></svg>
<div class="sep" style="left:601px;top:123px;height:20px"></div>
<svg style="left:608px;top:125px" width="16" height="16"><path d="M5 1l2 2M7 1l-2 2M10 1l2 2M12 1l-2 2" stroke="#404040" stroke-width="0.800"/><path d="M1.500 5v8" stroke="#606060" stroke-dasharray="1 1"/><rect x="4.500" y="5.500" width="10" height="9" fill="#40a0e0" stroke="#203060"/><rect x="5" y="10" width="9" height="4" fill="#208080"/><rect x="5" y="6" width="9" height="2" fill="#a0d0f0"/></svg>
<svg style="left:626px;top:132px" width="5" height="3"><path d="M0 0h5l-2.5 3z" fill="#000"/></svg>
<div class="sep" style="left:637px;top:123px;height:20px"></div>
<svg style="left:644px;top:125px" width="16" height="16"><path d="M5 1l3 2-3 3-3-2z" fill="#e8d840" stroke="#807020" stroke-width="0.500"/><path d="M12 1l3 3-3 3-3-3z" fill="#902020"/><path d="M2 6h11l-4 4v5l-3-1v-4z" fill="#e8e8e8" stroke="#606060"/></svg>
<div class="sep" style="left:666px;top:123px;height:20px"></div>
<svg style="left:676px;top:127px" width="10" height="11"><path d="M5 0.500l4.500 5h-2.500v5h-4v-5h-2.500z" fill="#60c8f0" stroke="#1050a0"/></svg>
<svg style="left:699px;top:127px" width="10" height="11"><path d="M5 10.500l4.500-5h-2.500v-5h-4v5h-2.500z" fill="#60c8f0" stroke="#1050a0"/></svg>
<div class="a" style="left:550px;top:145px;width:258px;height:430px;border:1px solid;border-color:#808080 #fff #fff #808080"></div>
<div class="a" style="left:551px;top:146px;width:256px;height:428px;border:1px solid;border-color:#404040 #d4d0c8 #d4d0c8 #404040;background:#fff"></div>
<div class="a" id="tree" style="left:552px;top:147px;width:239px;height:410px;overflow:hidden">
<div class="a" style="left:25px;top:0px;width:1px;height:91px;background-image:linear-gradient(to bottom,#909090 50%,rgba(255,255,255,0) 50%);background-size:1px 2px"></div>
<div class="a" style="left:62px;top:0px;width:1px;height:78px;background-image:linear-gradient(to bottom,#909090 50%,rgba(255,255,255,0) 50%);background-size:1px 2px"></div>
<div class="a" style="left:43px;top:100px;width:1px;height:68px;background-image:linear-gradient(to bottom,#909090 50%,rgba(255,255,255,0) 50%);background-size:1px 2px"></div>
<div class="a" style="left:62px;top:172px;width:1px;height:238px;background-image:linear-gradient(to bottom,#909090 50%,rgba(255,255,255,0) 50%);background-size:1px 2px"></div>
<div class="a" style="left:80px;top:262px;width:1px;height:148px;background-image:linear-gradient(to bottom,#909090 50%,rgba(255,255,255,0) 50%);background-size:1px 2px"></div>
<div class="a" style="left:98px;top:316px;width:1px;height:14px;background-image:linear-gradient(to bottom,#909090 50%,rgba(255,255,255,0) 50%);background-size:1px 2px"></div>
<div class="a" style="left:98px;top:352px;width:1px;height:14px;background-image:linear-gradient(to bottom,#909090 50%,rgba(255,255,255,0) 50%);background-size:1px 2px"></div>
<div class="a" style="left:62px;top:5px;width:12px;height:1px;background-image:linear-gradient(to right,#909090 50%,rgba(255,255,255,0) 50%);background-size:2px 1px"></div>
<svg style="left:75px;top:-3px" width="16" height="16"><ellipse cx="8" cy="8" rx="7" ry="4.500" fill="#ffff40" stroke="#303000"/></svg>
<div class="t" style="left:96.5px;top:-3px;font-size:12px;line-height:16px;height:16px;letter-spacing:0">审核用户</div>
<div class="a" style="left:62px;top:23px;width:12px;height:1px;background-image:linear-gradient(to right,#909090 50%,rgba(255,255,255,0) 50%);background-size:2px 1px"></div>
<svg style="left:75px;top:15px" width="16" height="16"><ellipse cx="8" cy="8" rx="7" ry="4.500" fill="#ffff40" stroke="#303000"/></svg>
<div class="t" style="left:96.5px;top:15px;font-size:12px;line-height:16px;height:16px;letter-spacing:0">管理文件类型</div>
<div class="a" style="left:62px;top:41px;width:12px;height:1px;background-image:linear-gradient(to right,#909090 50%,rgba(255,255,255,0) 50%);background-size:2px 1px"></div>
<svg style="left:75px;top:33px" width="16" height="16"><ellipse cx="8" cy="8" rx="7" ry="4.500" fill="#ffff40" stroke="#303000"/></svg>
<div class="t" style="left:96.5px;top:33px;font-size:12px;line-height:16px;height:16px;letter-spacing:0">创建俱乐部</div>
<div class="a" style="left:62px;top:59px;width:12px;height:1px;background-image:linear-gradient(to right,#909090 50%,rgba(255,255,255,0) 50%);background-size:2px 1px"></div>
<svg style="left:75px;top:51px" width="16" height="16"><circle cx="8" cy="3.500" r="2.200" fill="#ffff80" stroke="#000"/><path d="M8 6v5M3.500 8h9M8 11l-4 4.500M8 11l4 4.500" fill="none" stroke="#000"/></svg>
<div class="t" style="left:96.5px;top:51px;font-size:12px;line-height:16px;height:16px;letter-spacing:0">系统用户</div>
<div class="a" style="left:62px;top:77px;width:12px;height:1px;background-image:linear-gradient(to right,#909090 50%,rgba(255,255,255,0) 50%);background-size:2px 1px"></div>
<svg style="left:75px;top:69px" width="16" height="16"><circle cx="8" cy="3.500" r="2.200" fill="#ffff80" stroke="#000"/><path d="M8 6v5M3.500 8h9M8 11l-4 4.500M8 11l4 4.500" fill="none" stroke="#000"/></svg>
<div class="t" style="left:96.5px;top:69px;font-size:12px;line-height:16px;height:16px;letter-spacing:0">系统管理员</div>
<div class="a" style="left:31px;top:95px;width:7px;height:1px;background-image:linear-gradient(to right,#909090 50%,rgba(255,255,255,0) 50%);background-size:2px 1px"></div>
<div class="a" style="left:21px;top:91px;width:9px;height:9px;background:#fff;border:1px solid #808080"></div>
<div class="a" style="left:23px;top:95px;width:5px;height:1px;background:#000"></div>
<svg style="left:39px;top:87px" width="16" height="16"><path d="M1.500 5.500v-2h5l1 2" fill="#ffff40" stroke="#303000"/><rect x="1.500" y="5.500" width="12" height="8" fill="#ffff40" stroke="#303000"/><path d="M8 7l3.500 4.500h-7z" fill="#fff8a0" stroke="#303000"/></svg>
<div class="t" style="left:60.5px;top:88px">Specifications</div>
<div class="a" style="left:49px;top:113px;width:7px;height:1px;background-image:linear-gradient(to right,#909090 50%,rgba(255,255,255,0) 50%);background-size:2px 1px"></div>
<div class="a" style="left:39px;top:109px;width:9px;height:9px;background:#fff;border:1px solid #808080"></div>
<div class="a" style="left:41px;top:113px;width:5px;height:1px;background:#000"></div>
<div class="a" style="left:43px;top:111px;width:1px;height:5px;background:#000"></div>
<svg style="left:57px;top:105px" width="16" height="16"><path d="M1.500 5.500v-2h5l1 2" fill="#ffff40" stroke="#303000"/><rect x="1.500" y="5.500" width="12" height="8" fill="#ffff40" stroke="#303000"/><path d="M8 7l3.500 4.500h-7z" fill="#fff8a0" stroke="#303000"/></svg>
<div class="t" style="left:78.5px;top:106px">Business Type Model</div>
<div class="a" style="left:44px;top:131px;width:12px;height:1px;background-image:linear-gradient(to right,#909090 50%,rgba(255,255,255,0) 50%);background-size:2px 1px"></div>
<svg style="left:57px;top:123px" width="16" height="16"><path d="M1.500 5.500v-2h5l1 2" fill="#ffff40" stroke="#303000"/><rect x="1.500" y="5.500" width="12" height="8" fill="#ffff40" stroke="#303000"/><path d="M8 7l3.500 4.500h-7z" fill="#fff8a0" stroke="#303000"/></svg>
<div class="t" style="left:78.5px;top:124px">Interface Specifications</div>
<div class="a" style="left:44px;top:149px;width:12px;height:1px;background-image:linear-gradient(to right,#909090 50%,rgba(255,255,255,0) 50%);background-size:2px 1px"></div>
<svg style="left:57px;top:141px" width="16" height="16"><path d="M1.500 5.500v-2h5l1 2" fill="#ffff40" stroke="#303000"/><rect x="1.500" y="5.500" width="12" height="8" fill="#ffff40" stroke="#303000"/><path d="M8 7l3.500 4.500h-7z" fill="#fff8a0" stroke="#303000"/></svg>
<div class="a" style="left:75.5px;top:140px;width:100px;height:18px;background:#d4d0c8"></div>
<div class="t" style="left:78.5px;top:142px"><span style="font-size:12px">組件</span> Specifications</div>
<div class="a" style="left:49px;top:167px;width:7px;height:1px;background-image:linear-gradient(to right,#909090 50%,rgba(255,255,255,0) 50%);background-size:2px 1px"></div>
<div class="a" style="left:39px;top:163px;width:9px;height:9px;background:#fff;border:1px solid #808080"></div>
<div class="a" style="left:41px;top:167px;width:5px;height:1px;background:#000"></div>
<svg style="left:57px;top:159px" width="16" height="16"><path d="M1.500 5.500v-2h5l1 2" fill="#ffff40" stroke="#303000"/><rect x="1.500" y="5.500" width="12" height="8" fill="#ffff40" stroke="#303000"/><path d="M8 7l3.500 4.500h-7z" fill="#fff8a0" stroke="#303000"/></svg>
<div class="t" style="left:78.5px;top:160px">Component Architecture</div>
<div class="a" style="left:62px;top:185px;width:12px;height:1px;background-image:linear-gradient(to right,#909090 50%,rgba(255,255,255,0) 50%);background-size:2px 1px"></div>
<svg style="left:75px;top:177px" width="16" height="16"><path d="M1.500 0.500h9l4 3v12h-13z" fill="#fff" stroke="#202020"/><rect x="6.500" y="3.500" width="5" height="9" fill="#ffff40" stroke="#303000"/><rect x="4.500" y="5.500" width="4" height="2" fill="#ffff40" stroke="#303000"/><rect x="4.500" y="9.500" width="4" height="2" fill="#ffff40" stroke="#303000"/></svg>
<div class="t" style="left:96.5px;top:178px">Component Architecture Diagram</div>
<div class="a" style="left:62px;top:203px;width:12px;height:1px;background-image:linear-gradient(to right,#909090 50%,rgba(255,255,255,0) 50%);background-size:2px 1px"></div>
<svg style="left:75px;top:195px" width="16" height="16"><path d="M1.500 5.500v-2h5l1 2" fill="#ffff40" stroke="#303000"/><rect x="1.500" y="5.500" width="12" height="8" fill="#ffff40" stroke="#303000"/><path d="M8 7l3.500 4.500h-7z" fill="#fff8a0" stroke="#303000"/></svg>
<div class="t" style="left:96.5px;top:196px">Interactions</div>
<div class="a" style="left:62px;top:221px;width:12px;height:1px;background-image:linear-gradient(to right,#909090 50%,rgba(255,255,255,0) 50%);background-size:2px 1px"></div>
<svg style="left:75px;top:213px" width="16" height="16"><path d="M1.500 5.500v-2h5l1 2" fill="#ffff40" stroke="#303000"/><rect x="1.500" y="5.500" width="12" height="8" fill="#ffff40" stroke="#303000"/></svg>
<div class="t" style="left:96.5px;top:214px">Discuz.Web</div>
<div class="a" style="left:62px;top:239px;width:12px;height:1px;background-image:linear-gradient(to right,#909090 50%,rgba(255,255,255,0) 50%);background-size:2px 1px"></div>
<svg style="left:75px;top:231px" width="16" height="16"><path d="M1.500 5.500v-2h5l1 2" fill="#ffff40" stroke="#303000"/><rect x="1.500" y="5.500" width="12" height="8" fill="#ffff40" stroke="#303000"/></svg>
<div class="t" style="left:96.5px;top:232px">Discuz.Forum</div>
<div class="a" style="left:67px;top:257px;width:7px;height:1px;background-image:linear-gradient(to right,#909090 50%,rgba(255,255,255,0) 50%);background-size:2px 1px"></div>
<div class="a" style="left:57px;top:253px;width:9px;height:9px;background:#fff;border:1px solid #808080"></div>
<div class="a" style="left:59px;top:257px;width:5px;height:1px;background:#000"></div>
<svg style="left:75px;top:249px" width="16" height="16"><path d="M1.500 5.500v-2h5l1 2" fill="#ffff40" stroke="#303000"/><rect x="1.500" y="5.500" width="12" height="8" fill="#ffff40" stroke="#303000"/></svg>
<div class="t" style="left:96.5px;top:250px">Discuz.Web.UI</div>
<div class="a" style="left:80px;top:275px;width:12px;height:1px;background-image:linear-gradient(to right,#909090 50%,rgba(255,255,255,0) 50%);background-size:2px 1px"></div>
<svg style="left:93px;top:267px" width="16" height="16"><path d="M1.500 0.500h9l4 3v12h-13z" fill="#fff" stroke="#202020"/><rect x="5.500" y="3.500" width="5" height="3" fill="#d4d0c8" stroke="#202020"/><rect x="3.500" y="10.500" width="4" height="3" fill="#d4d0c8" stroke="#202020"/><rect x="9.500" y="10.500" width="4" height="3" fill="#d4d0c8" stroke="#202020"/><path d="M8 6.500v2M5.500 10.500v-2h6v2" fill="none" stroke="#202020"/></svg>
<div class="t" style="left:114.5px;top:268px">Utils</div>
<div class="a" style="left:80px;top:293px;width:12px;height:1px;background-image:linear-gradient(to right,#909090 50%,rgba(255,255,255,0) 50%);background-size:2px 1px"></div>
<svg style="left:93px;top:285px" width="16" height="16"><path d="M1.500 5.500v-2h5l1 2" fill="#ffff40" stroke="#303000"/><rect x="1.500" y="5.500" width="12" height="8" fill="#ffff40" stroke="#303000"/><path d="M8 7v3M6 12.500v-2.500h4v2.500" fill="none" stroke="#303000"/></svg>
<div class="t" style="left:114.5px;top:286px">Subsystem1</div>
<div class="a" style="left:85px;top:311px;width:7px;height:1px;background-image:linear-gradient(to right,#909090 50%,rgba(255,255,255,0) 50%);background-size:2px 1px"></div>
<div class="a" style="left:75px;top:307px;width:9px;height:9px;background:#fff;border:1px solid #808080"></div>
<div class="a" style="left:77px;top:311px;width:5px;height:1px;background:#000"></div>
<svg style="left:93px;top:303px" width="16" height="16"><rect x="2.500" y="2.500" width="12" height="11" fill="#ffff40" stroke="#303000"/><path d="M2.500 6.500h12M2.500 9.500h12" stroke="#303000"/></svg>
<div class="t" style="left:114.5px;top:304px">Tools</div>
<div class="a" style="left:98px;top:329px;width:12px;height:1px;background-image:linear-gradient(to right,#909090 50%,rgba(255,255,255,0) 50%);background-size:2px 1px"></div>
<svg style="left:111px;top:321px" width="16" height="16"><path d="M8 3.500l5 3-5 5.500-5-3z" fill="#30b0b0" stroke="#106060"/></svg>
<div class="t" style="left:132.5px;top:322px">runtime</div>
<div class="a" style="left:85px;top:347px;width:7px;height:1px;background-image:linear-gradient(to right,#909090 50%,rgba(255,255,255,0) 50%);background-size:2px 1px"></div>
<div class="a" style="left:75px;top:343px;width:9px;height:9px;background:#fff;border:1px solid #808080"></div>
<div class="a" style="left:77px;top:347px;width:5px;height:1px;background:#000"></div>
<svg style="left:93px;top:339px" width="16" height="16"><rect x="2.500" y="2.500" width="12" height="11" fill="#ffff40" stroke="#303000"/><path d="M2.500 6.500h12M2.500 9.500h12" stroke="#303000"/></svg>
<div class="t" style="left:114.5px;top:340px">Generic</div>
<div class="a" style="left:98px;top:365px;width:12px;height:1px;background-image:linear-gradient(to right,#909090 50%,rgba(255,255,255,0) 50%);background-size:2px 1px"></div>
<svg style="left:111px;top:357px" width="16" height="16"><path d="M8 3.500l6 2.500-5 5.500-6-2.500z" fill="#c02020" stroke="#601010"/><path d="M0 10.500h5M1 12.500h5M2 14.500h4" stroke="#808080" stroke-width="0.800"/></svg>
<div class="t" style="left:132.5px;top:358px">List&lt;&gt;()</div>
<div class="a" style="left:80px;top:383px;width:12px;height:1px;background-image:linear-gradient(to right,#909090 50%,rgba(255,255,255,0) 50%);background-size:2px 1px"></div>
<svg style="left:93px;top:375px" width="16" height="16"><rect x="2.500" y="2.500" width="12" height="11" fill="#ffff40" stroke="#303000"/><path d="M2.500 6.500h12M2.500 9.500h12" stroke="#303000"/></svg>
<div class="t" style="left:114.5px;top:376px">TypeCheckers</div>
<div class="a" style="left:80px;top:401px;width:12px;height:1px;background-image:linear-gradient(to right,#909090 50%,rgba(255,255,255,0) 50%);background-size:2px 1px"></div>
<svg style="left:93px;top:393px" width="16" height="16"><rect x="2.500" y="4.500" width="12" height="8" fill="#ffff40" stroke="#303000"/><path d="M4 10h9" stroke="#303000" stroke-width="1.500"/></svg>
<div class="t" style="left:114.5px;top:394px">TypeChecker</div>
</div>
<div class="a" style="left:791px;top:147px;width:16px;height:410px;background-image:repeating-conic-gradient(#fff 0% 25%,#d4d0c8 0% 50%);background-size:2px 2px"></div>
<div class="a" style="left:791px;top:147px;width:16px;height:15px;background:#d4d0c8;border:1px solid;border-color:#d4d0c8 #404040 #404040 #d4d0c8;box-shadow:inset 1px 1px 0 #fff,inset -1px -1px 0 #808080"></div>
<svg style="left:0;top:0" width="814" height="625"><path d="M795.5 156.0h7l-3.500-4z" fill="#000"/></svg>
<div class="a" style="left:791px;top:267px;width:16px;height:251px;background:#d4d0c8;border:1px solid;border-color:#d4d0c8 #404040 #404040 #d4d0c8;box-shadow:inset 1px 1px 0 #fff,inset -1px -1px 0 #808080"></div>
<div class="a" style="left:791px;top:541px;width:16px;height:16px;background:#d4d0c8;border:1px solid;border-color:#d4d0c8 #404040 #404040 #d4d0c8;box-shadow:inset 1px 1px 0 #fff,inset -1px -1px 0 #808080"></div>
<svg style="left:0;top:0" width="814" height="625"><path d="M795.5 547.0h7l-3.500 4z" fill="#000"/></svg>
<div class="a" style="left:552px;top:557px;width:239px;height:16px;background-image:repeating-conic-gradient(#fff 0% 25%,#d4d0c8 0% 50%);background-size:2px 2px"></div>
<div class="a" style="left:552px;top:557px;width:15px;height:16px;background:#d4d0c8;border:1px solid;border-color:#d4d0c8 #404040 #404040 #d4d0c8;box-shadow:inset 1px 1px 0 #fff,inset -1px -1px 0 #808080"></div>
<svg style="left:0;top:0" width="814" height="625"><path d="M561.0 561.5v7l-4-3.500z" fill="#000"/></svg>
<div class="a" style="left:567px;top:557px;width:184px;height:16px;background:#d4d0c8;border:1px solid;border-color:#d4d0c8 #404040 #404040 #d4d0c8;box-shadow:inset 1px 1px 0 #fff,inset -1px -1px 0 #808080"></div>
<div class="a" style="left:775px;top:557px;width:16px;height:16px;background:#d4d0c8;border:1px solid;border-color:#d4d0c8 #404040 #404040 #d4d0c8;box-shadow:inset 1px 1px 0 #fff,inset -1px -1px 0 #808080"></div>
<svg style="left:0;top:0" width="814" height="625"><path d="M781.0 561.5v7l4-3.500z" fill="#000"/></svg>
<div class="a" style="left:791px;top:557px;width:16px;height:16px;background:#d4d0c8"></div>
<div class="a" style="left:551px;top:576px;width:257px;height:21px;background:#eceae4"></div>
<div class="a" style="left:553px;top:576px;width:104px;height:21px;background:#d4d0c8;border:1px solid;border-color:#d4d0c8 #000 #000 #fff"></div>
<svg style="left:558px;top:578px" width="16" height="16"><rect x="0.500" y="0.500" width="13" height="9" fill="#fff" stroke="#404060"/><rect x="0" y="0" width="14" height="2.500" fill="#182878"/><path d="M5 4l3 2-3 3-3-2z" fill="#e8d840" stroke="#605010" stroke-width="0.500"/><path d="M12 5l3 3-3 3-3-3z" fill="#902020"/><path d="M10 10l3 3-3 3-3-3z" fill="#40a0c0"/></svg>
<div class="t" style="left:577px;top:580px">Model Explorer</div>
<svg style="left:661px;top:578px" width="16" height="16"><rect x="0.500" y="0.500" width="13" height="11" fill="#fff" stroke="#404060"/><rect x="0" y="0" width="14" height="2.500" fill="#182878"/><rect x="5.500" y="5.500" width="7" height="7" fill="#fff" stroke="#404040"/><rect x="8.500" y="8.500" width="6" height="6" fill="#fff" stroke="#404040"/><rect x="7.500" y="7.500" width="3" height="3" fill="#d4d0c8" stroke="#404040"/></svg>
<div class="t" style="left:681px;top:580px;color:#606060">Diagram Explorer</div>
<div class="a" style="left:771px;top:578px;width:1px;height:16px;background:#808080"></div>
<div class="a" style="left:3px;top:622px;width:811px;height:3px;background:#4c4c4c"></div>
<svg style="left:798px;top:609px" width="13" height="13"><path d="M12 1l-11 11M12 5l-7 7M12 9l-3 3" stroke="#808080"/><path d="M13 1l-12 12M13 5l-8 8M13 9l-4 4" stroke="#fff"/></svg>
<svg style="left:620.0px;top:574.5px;opacity:0.75" width="62.0" height="50.0" viewBox="-62 -50 124 100"><ellipse cx="-14" cy="37" rx="9" ry="4" fill="#c0a888"/><ellipse cx="22" cy="37" rx="9" ry="4" fill="#c0a888"/><path d="M-37 13C-46 9-56 3-58-6C-59-13-51-15-48-9C-46-14-37-13-37-5z" fill="#f0d860" stroke="#b89838" stroke-width="1.500"/><path d="M0-44C24-44 38-26 41 0C44 22 26 36 0 36C-28 36-44 22-41 0C-38-26-24-44 0-44z" fill="#f2dc68" stroke="#b89838" stroke-width="1.500"/><ellipse cx="2" cy="14" rx="27" ry="20" fill="#fbf3b8"/><ellipse cx="-26" cy="-11" rx="7" ry="3.500" fill="#f08060"/><ellipse cx="27" cy="-11" rx="6" ry="3" fill="#f08060"/><ellipse cx="2" cy="-11" rx="16" ry="4" fill="#d0a850" stroke="#a08040"/><path d="M-27 -18h24M9 -18h22" stroke="#a08848" stroke-width="1.500"/></svg>
<div class="t" style="left:669px;top:591px;font-size:26.500px;line-height:32px;height:32px;font-weight:bold;letter-spacing:-0.3px;opacity:0.850"><span style="color:#e05a3a;letter-spacing:0.8px">3DM</span><span style="color:#40b4e4;letter-spacing:-1.2px">GAME</span></div>
</body></html>
